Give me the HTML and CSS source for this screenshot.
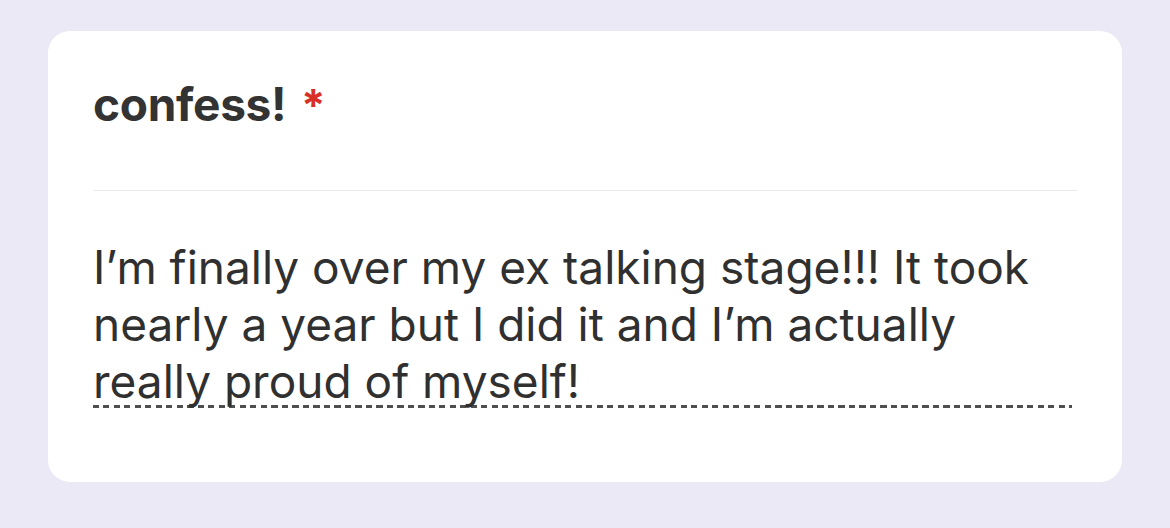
FILE: index.html
```html
<!DOCTYPE html>
<html lang="en">
<head>
<meta charset="utf-8">
<title>confess!</title>
<link rel="stylesheet" href="styles.css">
</head>
<body>
  <main class="card">
    <h1 class="title">confess! <span class="required">*</span></h1>
    <hr class="divider">
    <div class="answer">
      <p class="answer-text">I’m finally over my ex talking stage!!! It took nearly a year but I did it and I’m actually really proud of myself!</p>
      <div class="answer-line"></div>
    </div>
  </main>
</body>
</html>
```

FILE: styles.css
```css
html, body {
  margin: 0;
  padding: 0;
}
body {
  width: 1170px;
  height: 528px;
  background: #ece9f7;
  font-family: Inter, "Liberation Sans", Arial, sans-serif;
  color: #333333;
  padding: 31px 48px 0 48px;
  box-sizing: border-box;
}
.card {
  background: #ffffff;
  border-radius: 22px;
  height: 451px;
  box-sizing: border-box;
  padding: 45px 45px 0 45px;
}
.title {
  margin: 0;
  font-size: 46px;
  line-height: 56px;
  font-weight: 700;
  letter-spacing: -0.3px;
  color: #333333;
}
.required {
  color: #d93025;
  font-weight: 700;
  font-size: 44px;
  margin-left: 4px;
}
.divider {
  border: 0;
  height: 1px;
  background: #ebebeb;
  margin: 57px 0 0 0;
  width: 984px;
}
.answer {
  margin-top: 48px;
  width: 979px;
}
.answer-text {
  margin: 0;
  font-size: 46px;
  line-height: 57px;
  font-weight: 400;
  color: #303030;
}
.answer-line {
  height: 2px;
  margin-top: -5px;
  border-bottom: 1px solid transparent;
  background: repeating-linear-gradient(to right, #4f4f4f 0, #4f4f4f 6px, transparent 6px, transparent 10.5px);
}
```
